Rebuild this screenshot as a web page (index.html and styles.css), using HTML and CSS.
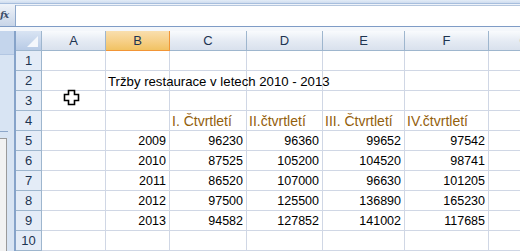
FILE: index.html
```html
<!DOCTYPE html>
<html lang="cs">
<head>
  <meta charset="UTF-8">
  <title>Tržby restaurace</title>
  <link rel="stylesheet" href="styles.css">
</head>
<body>

  <div class="top-band"></div>

  <div class="formula-bar">
    <div class="fx-btn"><span>fx</span></div>
    <div class="formula-input"></div>
  </div>

  <div class="spacer"></div>

  <div class="main">
    <div class="side-pane">
      <div class="pane-box"></div>
      <div class="pane-body"></div>
      <div class="pane-foot"></div>
    </div>

    <div class="sheet">
      <!-- hlavicka sloupcu -->
      <div class="corner"><span class="corner-tri"></span></div>
      <div class="hd">A</div>
      <div class="hd hd-sel">B</div>
      <div class="hd">C</div>
      <div class="hd">D</div>
      <div class="hd">E</div>
      <div class="hd">F</div>
      <div class="hd">G</div>

      <div class="rh">1</div>
      <div class="c"></div><div class="c"></div><div class="c"></div><div class="c"></div><div class="c"></div><div class="c"></div><div class="c"></div>

      <div class="rh">2</div>
      <div class="c"></div>
      <div class="c title">Tržby restaurace v letech 2010 - 2013</div>
      <div class="c"></div><div class="c"></div><div class="c"></div><div class="c"></div><div class="c"></div>

      <div class="rh">3</div>
      <div class="c"></div><div class="c"></div><div class="c"></div><div class="c"></div><div class="c"></div><div class="c"></div><div class="c"></div>

      <div class="rh">4</div>
      <div class="c"></div><div class="c"></div>
      <div class="c q">I. Čtvrtletí</div>
      <div class="c q">II.čtvrtletí</div>
      <div class="c q">III. Čtvrtletí</div>
      <div class="c q">IV.čtvrtletí</div>
      <div class="c"></div>

      <div class="rh">5</div>
      <div class="c"></div>
      <div class="c num">2009</div>
      <div class="c num">96230</div>
      <div class="c num">96360</div>
      <div class="c num">99652</div>
      <div class="c num">97542</div>
      <div class="c"></div>

      <div class="rh">6</div>
      <div class="c"></div>
      <div class="c num">2010</div>
      <div class="c num">87525</div>
      <div class="c num">105200</div>
      <div class="c num">104520</div>
      <div class="c num">98741</div>
      <div class="c"></div>

      <div class="rh">7</div>
      <div class="c"></div>
      <div class="c num">2011</div>
      <div class="c num">86520</div>
      <div class="c num">107000</div>
      <div class="c num">96630</div>
      <div class="c num">101205</div>
      <div class="c"></div>

      <div class="rh">8</div>
      <div class="c"></div>
      <div class="c num">2012</div>
      <div class="c num">97500</div>
      <div class="c num">125500</div>
      <div class="c num">136890</div>
      <div class="c num">165230</div>
      <div class="c"></div>

      <div class="rh">9</div>
      <div class="c"></div>
      <div class="c num">2013</div>
      <div class="c num">94582</div>
      <div class="c num">127852</div>
      <div class="c num">141002</div>
      <div class="c num">117685</div>
      <div class="c"></div>

      <div class="rh">10</div>
      <div class="c"></div><div class="c"></div><div class="c"></div><div class="c"></div><div class="c"></div><div class="c"></div><div class="c"></div>

      <div class="rh"></div>
      <div class="c"></div><div class="c"></div><div class="c"></div><div class="c"></div><div class="c"></div><div class="c"></div><div class="c"></div>
    </div>

    <!-- kurzor mysi -->
    <svg class="cursor" width="17" height="17" viewBox="0 0 17 17">
      <path d="M5.5 1.5 H11.5 V5.5 H15.5 V11.5 H11.5 V15.5 H5.5 V11.5 H1.5 V5.5 H5.5 Z" fill="#fff" stroke="#000" stroke-width="1.6"/>
    </svg>
  </div>

</body>
</html>
```

FILE: styles.css
```css
body {
  margin: 0;
  width: 520px;
  height: 251px;
  overflow: hidden;
  background-color: #fff;
  font-family: "Liberation Sans", Arial, sans-serif;
  color: #000;
}

.top-band {
  height: 3px;
  background: linear-gradient(#e3ecf7, #cfdcee);
  border-bottom: 1px solid #a7bedd;
}

.formula-bar {
  display: flex;
  height: 22px;
  background-color: #eef3fa;
  border-bottom: 1px solid #7f9cc6;
}

.fx-btn {
  width: 15px;
  margin-top: 1px;
  border-right: 1px solid #8ea8cb;
  background: linear-gradient(#eef2f8, #c8d5e8);
  overflow: hidden;
}

.fx-btn span {
  display: block;
  margin-left: 0;
  font-family: "DejaVu Serif", serif;
  font-style: italic;
  font-weight: bold;
  font-size: 10px;
  letter-spacing: -1px;
  line-height: 20px;
  color: #3d4f6b;
}

.formula-input {
  flex: 1;
  margin-top: 1px;
  border-top: 1px solid #b5c6dd;
  background-color: #fff;
}

.spacer {
  height: 4px;
  background-color: #f4f7fb;
}

.main {
  position: relative;
  display: flex;
  overflow: hidden;
}

.side-pane {
  flex-shrink: 0;
  width: 14px;
  display: flex;
  flex-direction: column;
  border-right: 2px solid #86a3c9;
  background-color: #d8e4f3;
}

.pane-box {
  height: 24px;
  margin-top: -1px;
  background-color: #c4d5ec;
  border-bottom: 1px solid #b2c6e2;
}

.pane-body {
  height: 76px;
  border-bottom: 1px solid #8ca6c9;
  margin-right: 6px;
}

.pane-foot {
  flex: 1;
  margin-top: 6px;
  width: 6px;
  background-color: #f2f2f2;
  border-top: 1px solid #9a9a9a;
  border-right: 1px solid #9a9a9a;
}

.sheet {
  flex-shrink: 0;
  display: grid;
  grid-template-columns: 26px 64px 64px 77px 76px 82px 84px 72px;
  grid-auto-rows: 20px;
}

.sheet > div {
  box-sizing: border-box;
  white-space: nowrap;
}

.corner {
  display: flex;
  justify-content: flex-end;
  align-items: flex-end;
  padding: 0 3px 3px 0;
  border-right: 1px solid #9eb6ce;
  border-bottom: 1px solid #9eb6ce;
  background: linear-gradient(#d9e4f3, #b8cbe6);
}

.corner-tri {
  width: 0;
  height: 0;
  border-left: 11px solid transparent;
  border-bottom: 11px solid #f4f7fc;
}

.hd {
  text-align: center;
  font-size: 13px;
  line-height: 19px;
  color: #1d3451;
  border-right: 1px solid #9eb6ce;
  border-bottom: 1px solid #9eb6ce;
  background: linear-gradient(#f9fbfd, #e4eaf3 55%, #d9e1ed);
}

.hd-sel {
  border-right-color: #f29536;
  border-bottom-color: #f29536;
  background: linear-gradient(#f9dfae, #f6cf86 55%, #f1c263);
}

.rh {
  text-align: center;
  font-size: 13px;
  line-height: 20px;
  color: #1d3451;
  background-color: #e4ecf7;
  border-right: 1px solid #9eb6ce;
  border-bottom: 1px solid #9eb6ce;
}

.c {
  border-right: 1px solid #d0d7e5;
  border-bottom: 1px solid #d0d7e5;
  font-size: 12.5px;
  line-height: 21px;
  overflow: visible;
}

.num {
  text-align: right;
  padding-right: 3px;
}

.title {
  position: relative;
  padding-left: 2px;
  font-size: 13.2px;
  z-index: 1;
}

.q {
  padding-left: 2px;
  font-size: 14px;
  color: #93600c;
}

.cursor {
  position: absolute;
  left: 63px;
  top: 58px;
}
```
